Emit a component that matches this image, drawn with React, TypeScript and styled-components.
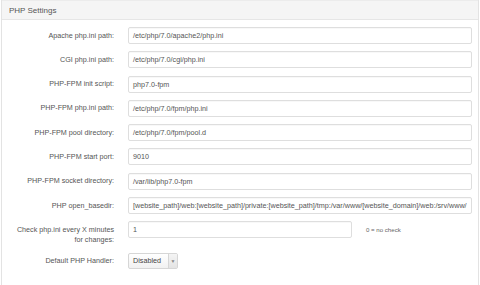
import React from "react";
import styled, { createGlobalStyle } from "styled-components";

const Global = createGlobalStyle`
  html, body { margin: 0; padding: 0; background: #ffffff; }
  body { font-family: "Liberation Sans", Arial, sans-serif; color: #555; }
  * { box-sizing: border-box; }
`;

const Panel = styled.div`
  margin: 0 1px;
  height: 290px;
  border: 1px solid #e3e3e3;
  border-top: none;
  background: #fff;
`;

const PanelHeader = styled.div`
  height: 20px;
  background: #f5f5f5;
  border-bottom: 1px solid #e6e6e6;
  border-top: 1px solid #ececec;
  display: flex;
  align-items: center;
  padding-left: 7px;
  font-size: 8px;
  color: #555;
`;

const Form = styled.div`
  display: grid;
  grid-template-columns: 104px 1fr;
  column-gap: 14px;
  row-gap: 7.3px;
  padding: 7px 7px 0 8px;
`;

const Label = styled.div`
  text-align: right;
  font-size: 7.2px;
  line-height: 10px;
  padding-top: 3.5px;
  color: #555;
`;

const Field = styled.div`
  display: flex;
  align-items: flex-start;
`;

const Input = styled.div<{ $width?: number }>`
  height: 17px;
  width: ${(p) => (p.$width ? `${p.$width}px` : "100%")};
  border: 1px solid #dedede;
  border-radius: 2px;
  box-shadow: inset 0 1px 1px rgba(0, 0, 0, 0.03);
  display: flex;
  align-items: center;
  padding: 0 4px;
  font-size: 7.2px;
  color: #555;
  white-space: nowrap;
  overflow: hidden;
`;

const Help = styled.div`
  margin-left: 14px;
  font-size: 6.1px;
  line-height: 17px;
  color: #666;
`;

const Select = styled.div`
  margin-top: 0.5px;
  height: 16px;
  width: 50px;
  border: 1px solid #d6d6d6;
  border-radius: 2px;
  background: linear-gradient(#ffffff, #f1f1f1);
  display: flex;
  align-items: stretch;
  font-size: 7.2px;
  color: #444;
`;

const SelectText = styled.div`
  flex: 1;
  display: flex;
  align-items: center;
  padding-left: 4px;
`;

const SelectArrow = styled.div`
  width: 9px;
  border-left: 1px solid #d6d6d6;
  background: linear-gradient(#f4f4f4, #e4e4e4);
  display: flex;
  align-items: center;
  justify-content: center;
  font-size: 5px;
  color: #888;
`;

type Row = { label: React.ReactNode; value: string };

const rows: Row[] = [
  { label: "Apache php.ini path:", value: "/etc/php/7.0/apache2/php.ini" },
  { label: "CGI php.ini path:", value: "/etc/php/7.0/cgi/php.ini" },
  { label: "PHP-FPM init script:", value: "php7.0-fpm" },
  { label: "PHP-FPM php.ini path:", value: "/etc/php/7.0/fpm/php.ini" },
  { label: "PHP-FPM pool directory:", value: "/etc/php/7.0/fpm/pool.d" },
  { label: "PHP-FPM start port:", value: "9010" },
  { label: "PHP-FPM socket directory:", value: "/var/lib/php7.0-fpm" },
  {
    label: "PHP open_basedir:",
    value:
      "[website_path]/web:[website_path]/private:[website_path]/tmp:/var/www/[website_domain]/web:/srv/www/",
  },
];

export default function App() {
  return (
    <>
      <Global />
      <Panel>
        <PanelHeader>PHP Settings</PanelHeader>
        <Form>
          {rows.map((r, i) => (
            <React.Fragment key={i}>
              <Label>{r.label}</Label>
              <Field>
                <Input>{r.value}</Input>
              </Field>
            </React.Fragment>
          ))}
          <Label>
            Check php.ini every X minutes
            <br />
            for changes:
          </Label>
          <Field>
            <Input $width={224}>1</Input>
            <Help>0 = no check</Help>
          </Field>
          <Label>Default PHP Handler:</Label>
          <Field>
            <Select>
              <SelectText>Disabled</SelectText>
              <SelectArrow>▼</SelectArrow>
            </Select>
          </Field>
        </Form>
      </Panel>
    </>
  );
}
